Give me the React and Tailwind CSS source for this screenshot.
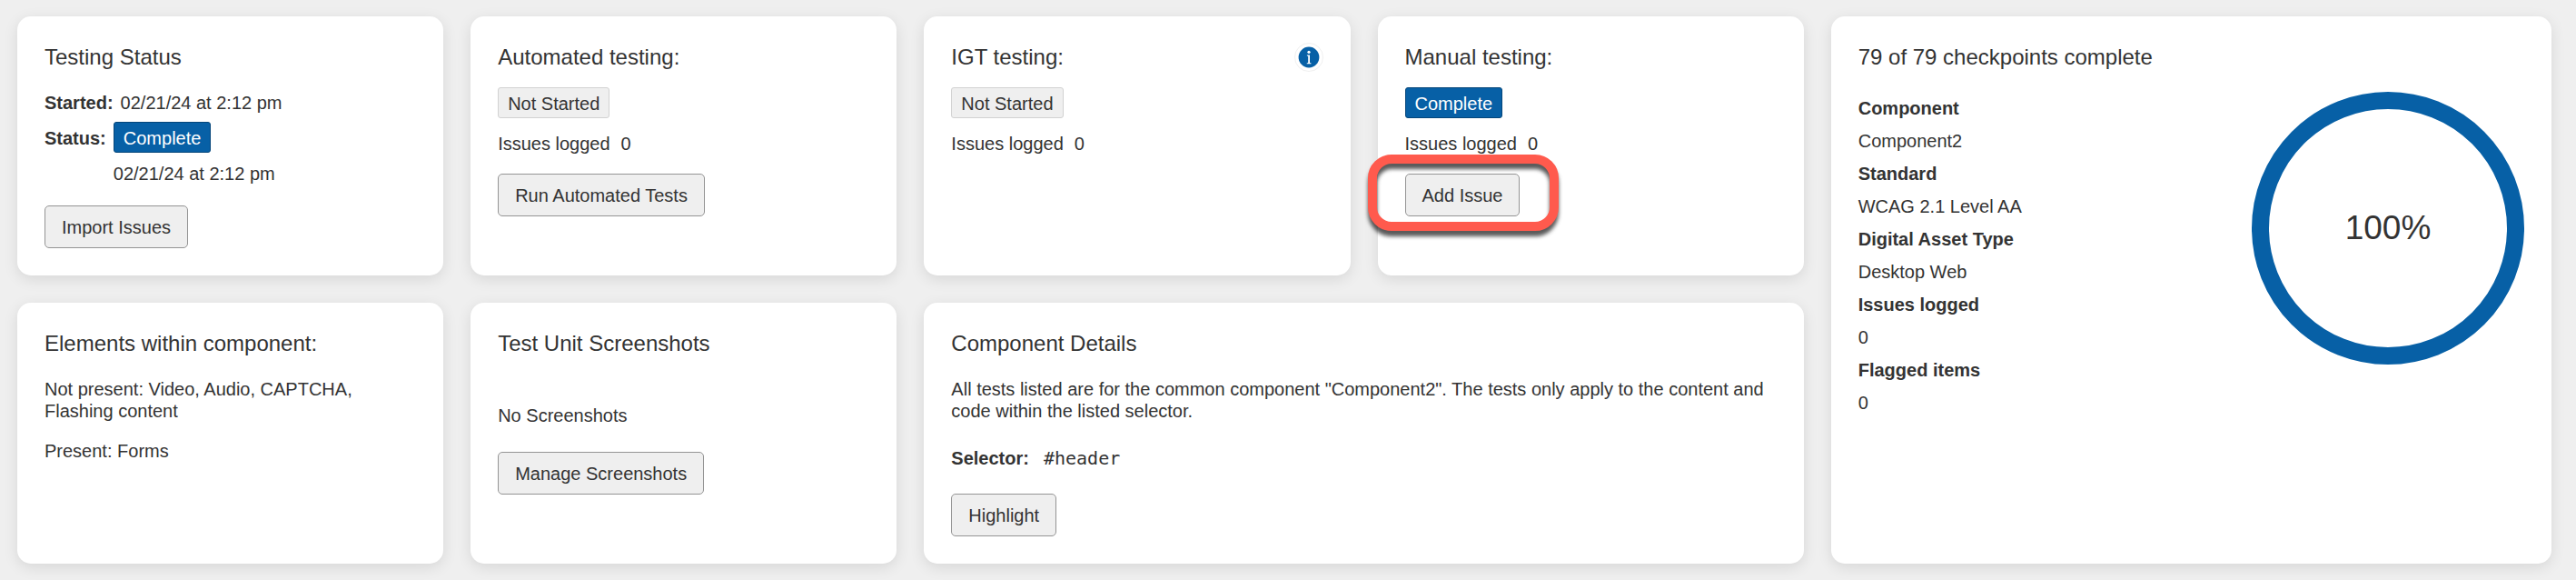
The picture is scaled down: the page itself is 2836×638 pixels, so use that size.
import { useState } from "react";
import clsx from "clsx";

const summary = [
  { label: "Component", value: "Component2" },
  { label: "Standard", value: "WCAG 2.1 Level AA" },
  { label: "Digital Asset Type", value: "Desktop Web" },
  { label: "Issues logged", value: "0" },
  { label: "Flagged items", value: "0" },
];

function Card({ title, action, className, children }) {
  return (
    <section
      className={clsx(
        "rounded-[15px] bg-white p-[30px] shadow-[0_4px_16px_rgba(0,0,0,0.1)]",
        className
      )}
    >
      <div className="flex items-center justify-between">
        <h2 className="text-2xl leading-[29px]">{title}</h2>
        {action}
      </div>
      {children}
    </section>
  );
}

function Badge({ status }) {
  const complete = status === "Complete";
  return (
    <span
      className={clsx(
        "inline-block rounded-[3px] border px-2.5 pt-[5px] pb-[3px]",
        complete
          ? "border-[#04457a] bg-[#0760a6] text-white"
          : "border-[#d2d2d2] bg-[#efefef]"
      )}
    >
      {status}
    </span>
  );
}

function Button({ children, ...props }) {
  return (
    <button
      type="button"
      className="rounded-[5px] border border-[#949494] bg-[#efefef] px-[18px] pt-[11px] pb-2.5 hover:bg-[#e4e4e4]"
      {...props}
    >
      {children}
    </button>
  );
}

function InfoButton() {
  return (
    <button
      type="button"
      aria-label="About IGT testing"
      className="-my-0.5 flex size-8 items-center justify-center rounded-full border border-[#f0f0f0]"
    >
      <svg viewBox="0 0 24 24" className="size-6" aria-hidden="true">
        <circle cx="12" cy="12" r="11.4" fill="#0760a6" />
        <circle cx="12" cy="6.3" r="1.6" fill="#fff" />
        <path
          d="M9.9 9.6h3.1v8.4l1.5.4v.8H9.7v-.8l1.5-.4v-7.2l-1.3-.4z"
          fill="#fff"
        />
      </svg>
    </button>
  );
}

function TestingCard({ title, status, issues, action, children }) {
  return (
    <Card title={title} action={action}>
      <div className="mt-[19px] flex">
        <Badge status={status} />
      </div>
      <dl className="mt-4 flex gap-3">
        <dt>Issues logged</dt>
        <dd>{issues}</dd>
      </dl>
      {children && <div className="mt-[21px] flex">{children}</div>}
    </Card>
  );
}

function ProgressRing({ percent }) {
  const radius = 140.5;
  const length = 2 * Math.PI * radius;
  return (
    <div className="relative size-[300px] shrink-0">
      <svg viewBox="0 0 300 300" className="size-full" aria-hidden="true">
        <circle
          cx="150"
          cy="150"
          r={radius}
          fill="none"
          stroke="#0760a6"
          strokeWidth="19"
          strokeDasharray={`${(length * percent) / 100} ${length}`}
          transform="rotate(-90 150 150)"
        />
      </svg>
      <span className="absolute inset-0 flex items-center justify-center text-[37px]">
        {percent}%
      </span>
    </div>
  );
}

function App() {
  const [percent] = useState(100);

  return (
    <main className="grid min-h-screen grid-cols-[repeat(4,469fr)_793fr] content-start gap-[30px] bg-[#efefef] pt-[18px] pr-[27px] pb-[18px] pl-[19px] font-['Liberation_Sans',Arial,sans-serif] text-xl leading-6 text-[#333]">
      <Card title="Testing Status">
        <dl className="mt-[18px] flex flex-col gap-[5px]">
          <div className="flex gap-2">
            <dt className="pt-1.5 pb-1 font-bold">Started:</dt>
            <dd className="pt-1.5 pb-1">02/21/24 at 2:12 pm</dd>
          </div>
          <div className="flex gap-2">
            <dt className="pt-1.5 pb-1 font-bold">Status:</dt>
            <dd className="flex flex-col items-start gap-[5px]">
              <Badge status="Complete" />
              <span className="pt-1.5 pb-1">02/21/24 at 2:12 pm</span>
            </dd>
          </div>
        </dl>
        <div className="mt-[19px] flex">
          <Button>Import Issues</Button>
        </div>
      </Card>

      <TestingCard title="Automated testing:" status="Not Started" issues={0}>
        <Button>Run Automated Tests</Button>
      </TestingCard>

      <TestingCard
        title="IGT testing:"
        status="Not Started"
        issues={0}
        action={<InfoButton />}
      />

      <TestingCard title="Manual testing:" status="Complete" issues={0}>
        <div className="relative">
          <Button>Add Issue</Button>
          {/* Callout around the button */}
          <div className="pointer-events-none absolute -top-[21px] -right-[43px] -bottom-4 -left-[41px] rounded-[26px] border-10 border-[#ff5a4d] drop-shadow-[0_6px_2px_rgba(0,0,0,0.65)]" />
        </div>
      </TestingCard>

      <Card title="79 of 79 checkpoints complete" className="row-span-2">
        <div className="mt-6 flex items-start justify-between">
          <dl className="flex flex-col gap-3 pt-1.5">
            {summary.map((item) => (
              <div key={item.label} className="flex flex-col gap-3">
                <dt className="font-bold">{item.label}</dt>
                <dd>{item.value}</dd>
              </div>
            ))}
          </dl>
          <ProgressRing percent={percent} />
        </div>
      </Card>

      <Card title="Elements within component:">
        <p className="mt-6">
          Not present: Video, Audio, CAPTCHA, Flashing content
        </p>
        <p className="mt-5">Present: Forms</p>
      </Card>

      <Card title="Test Unit Screenshots">
        <p className="mt-[53px]">No Screenshots</p>
        <div className="mt-7 flex">
          <Button>Manage Screenshots</Button>
        </div>
      </Card>

      <Card title="Component Details" className="col-span-2">
        <p className="mt-6">
          All tests listed are for the common component "Component2". The tests
          only apply to the content and code within the listed selector.
        </p>
        <dl className="mt-7 flex gap-4">
          <dt className="font-bold">Selector:</dt>
          <dd>
            <code className="font-['DejaVu_Sans_Mono',monospace]">#header</code>
          </dd>
        </dl>
        <div className="mt-[27px] flex">
          <Button>Highlight</Button>
        </div>
      </Card>
    </main>
  );
}

export default App;
